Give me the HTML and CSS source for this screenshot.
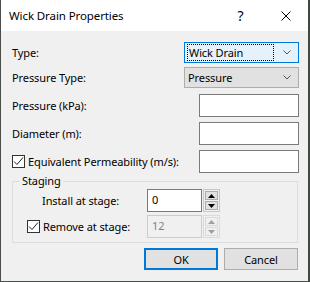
FILE: index.html
```html
<!DOCTYPE html>
<html>
<head>
<meta charset="UTF-8">
<title>Wick Drain Properties</title>
<link rel="stylesheet" href="styles.css">
</head>
<body>
<div class="window">
	<div class="titlebar">
		<span class="title">Wick Drain Properties</span>
		<span class="help">?</span>
		<span class="close"><svg width="10" height="10" viewBox="0 0 10 10"><path d="M0.5 0.5L9.5 9.5M9.5 0.5L0.5 9.5" stroke="#000" stroke-width="1"/></svg></span>
	</div>
	<div class="content">
		<div class="row row-type">
			<span class="lbl">Type:</span>
			<div class="combo focused"><span class="combo-text">Wick Drain</span><svg class="chev" width="8" height="5" viewBox="0 0 8 5"><path d="M0.5 0.5L4 4L7.5 0.5" fill="none" stroke="#555" stroke-width="1"/></svg></div>
		</div>
		<div class="row row-ptype">
			<span class="lbl">Pressure Type:</span>
			<div class="combo"><span class="combo-text">Pressure</span><svg class="chev" width="8" height="5" viewBox="0 0 8 5"><path d="M0.5 0.5L4 4L7.5 0.5" fill="none" stroke="#555" stroke-width="1"/></svg></div>
		</div>
		<div class="row row-edit first-edit">
			<span class="lbl">Pressure (kPa):</span>
			<div class="edit"></div>
		</div>
		<div class="row row-edit">
			<span class="lbl">Diameter (m):</span>
			<div class="edit"></div>
		</div>
		<div class="row row-edit">
			<span class="lbl"><span class="check"><svg width="11" height="11" viewBox="0 0 11 11"><path d="M1 5.5L4 8.5L10 1.5" fill="none" stroke="#222" stroke-width="1"/></svg></span>Equivalent Permeability (m/s):</span>
			<div class="edit"></div>
		</div>
		<div class="group">
			<span class="legend">Staging</span>
			<div class="grow">
				<span class="glbl">Install at stage:</span>
				<div class="spin">
					<div class="spin-edit">0</div>
					<div class="spin-btns">
						<div class="sbtn"><svg width="7" height="4" viewBox="0 0 7 4"><path d="M3.5 0L7 4H0Z" fill="#000"/></svg></div>
						<div class="sbtn"><svg width="7" height="4" viewBox="0 0 7 4"><path d="M0 0H7L3.5 4Z" fill="#000"/></svg></div>
					</div>
				</div>
			</div>
			<div class="grow">
				<span class="glbl gcheck"><span class="check"><svg width="11" height="11" viewBox="0 0 11 11"><path d="M1 5.5L4 8.5L10 1.5" fill="none" stroke="#222" stroke-width="1"/></svg></span>Remove at stage:</span>
				<div class="spin disabled">
					<div class="spin-edit">12</div>
					<div class="spin-btns">
						<div class="sbtn"><svg width="7" height="4" viewBox="0 0 7 4"><path d="M3.5 0L7 4H0Z" fill="#a0a0a0"/></svg></div>
						<div class="sbtn"><svg width="7" height="4" viewBox="0 0 7 4"><path d="M0 0H7L3.5 4Z" fill="#a0a0a0"/></svg></div>
					</div>
				</div>
			</div>
		</div>
		<div class="buttons">
			<div class="btn default">OK</div>
			<div class="btn">Cancel</div>
		</div>
	</div>
</div>
</body>
</html>
```
FILE: styles.css
```css
*{
  margin:0;
  padding:0;
  box-sizing:border-box;
}

body{
  background:#3c4a3e;
  font-family:"Noto Sans",Arial,sans-serif;
  font-size:11px;
  letter-spacing:-0.1px;
  color:#000;
}

.window{
  width:310px;
  height:282px;
  border-left:1px solid #4b4f4c;
  border-right:2px solid #3e4a40;
  border-bottom:1px solid #4b4f4c;
  background:#f0f0f0;
  display:flex;
  flex-direction:column;
}

.titlebar{
  height:31px;
  background:#fff;
  display:flex;
  align-items:center;
  flex:none;
}
.title{padding-left:8px;font-size:11.5px;color:#000;flex:1}
.help{font-size:14px;width:46px;text-align:center;padding-left:3px}
.close{width:46px;display:flex;justify-content:center;padding-left:2px}
.close svg{display:block}

.content{
  flex:1;
  padding:11px 9px 0 11px;
  display:flex;
  flex-direction:column;
}

.row{
  display:flex;
  justify-content:space-between;
  align-items:center;
}
.row-type{height:21px}
.row-ptype{height:21px;margin-top:4px}
.row-edit{height:23px;margin-top:5px}
.first-edit{margin-top:6px}

.lbl{display:flex;align-items:center}

.combo{
  width:115px;
  height:21px;
  border:1px solid #adadad;
  background:#e1e1e1;
  display:flex;
  align-items:center;
  padding:0 7px 0 3px;
}
.combo.focused{border-color:#0078d7;background:#e5f1fb}
.combo-text{flex:1;padding-left:1px;line-height:15px}
.combo.focused .combo-text{outline:1px dotted #000;margin-right:10px;height:15px}
.combo:not(.focused) .combo-text{padding-left:0}
.chev{display:block}

.edit{
  width:100px;
  height:23px;
  border:1px solid #7a7a7a;
  background:#fff;
}

.check{
  width:13px;
  height:13px;
  border:1px solid #333;
  background:#fff;
  margin-right:3px;
  display:flex;
  align-items:center;
  justify-content:center;
}
.check svg{display:block}

.group{
  position:relative;
  margin-top:8px;
  height:62px;
  margin-right:1px;
  border:1px solid #dcdcdc;
  padding:7px 0 0 0;
}
.legend{
  position:absolute;
  top:-9px;
  left:7px;
  padding:0 2px;
  background:#f0f0f0;
}

.grow{
  display:flex;
  align-items:center;
  height:23px;
  margin-bottom:3px;
}
.glbl{width:134px;padding-left:29px;display:flex;align-items:center}
.gcheck{padding-left:14px}

.spin{display:flex;height:23px}
.spin-edit{
  width:55px;
  height:23px;
  border:1px solid #7a7a7a;
  background:#fff;
  padding:2px 0 0 4px;
}
.spin-btns{
  width:17px;
  margin-left:1px;
  border:1px solid #c7c7c7;
  display:flex;
  flex-direction:column;
  gap:1px;
  padding:1px;
  background:#f0f0f0;
}
.sbtn{
  flex:1;
  background:#e1e1e1;
  border:1px solid #adadad;
  display:flex;
  align-items:center;
  justify-content:center;
}
.sbtn svg{display:block}
.spin.disabled .spin-edit{border-color:#cccccc;background:#f0f0f0;color:#838383}
.spin.disabled .spin-btns{border-color:#dadada}
.spin.disabled .sbtn{background:#f0f0f0;border-color:#dadada}

.buttons{
  display:flex;
  justify-content:flex-end;
  gap:6px;
  margin-top:5px;
  padding-right:1px;
}
.btn{
  width:74px;
  height:22px;
  border:1px solid #adadad;
  background:#e1e1e1;
  display:flex;
  align-items:center;
  justify-content:center;
}
.btn.default{border:2px solid #0078d7}
```
